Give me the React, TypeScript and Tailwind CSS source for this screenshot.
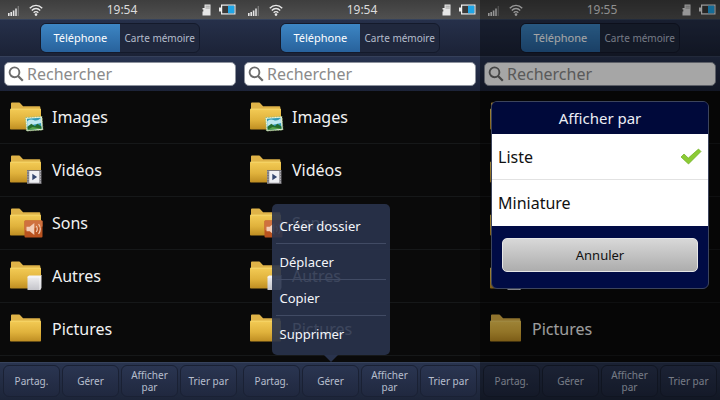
import React, { useState } from 'react';

type Badge = 'image' | 'video' | 'sound' | 'file' | null;

interface Folder {
  name: string;
  badge: Badge;
}

const folders: Folder[] = [
  { name: 'Images', badge: 'image' },
  { name: 'Vidéos', badge: 'video' },
  { name: 'Sons', badge: 'sound' },
  { name: 'Autres', badge: 'file' },
  { name: 'Pictures', badge: null },
];

const actions = ['Partag.', 'Gérer', 'Afficher par', 'Trier par'];
const menuItems = ['Créer dossier', 'Déplacer', 'Copier', 'Supprimer'];
const viewModes = ['Liste', 'Miniature'];

function SignalIcon() {
  return (
    <svg width="12" height="12" viewBox="0 0 12 12" aria-hidden="true">
      <rect x="0" y="9" width="1.6" height="3" fill="#e6e6e6" />
      <rect x="2.4" y="8" width="1.6" height="4" fill="#e6e6e6" />
      <rect x="4.8" y="6.5" width="1.6" height="5.5" fill="#e6e6e6" />
      <rect x="7.2" y="4.5" width="1.6" height="7.5" fill="#dcdcdc" />
      <rect x="9.6" y="2" width="1.4" height="10" fill="#777" />
    </svg>
  );
}

function WifiIcon() {
  return (
    <svg width="14" height="12" viewBox="0 0 14 12" fill="none" stroke="#e8e8e8" aria-hidden="true">
      <path d="M.8 4.2C4.2.4 9.8.4 13.2 4.2" strokeWidth="1.4" />
      <path d="M2.8 6.5C5.2 3.9 8.8 3.9 11.2 6.5" strokeWidth="1.4" />
      <path d="M4.7 8.7C6 7.3 8 7.3 9.3 8.7" strokeWidth="1.4" />
      <circle cx="7" cy="10.6" r="1.3" fill="#e8e8e8" stroke="none" />
    </svg>
  );
}

function CardIcon() {
  return (
    <svg width="9" height="12" viewBox="0 0 9 12" aria-hidden="true">
      <path d="M2.5 .5h6v11h-8V7.500h.8V5.500H.5V4h2z" fill="#e6e6e6" />
      <path d="M3.500 2.200h4.300M3.500 4h4.300" stroke="#8a8a8a" strokeWidth=".8" />
    </svg>
  );
}

function BatteryIcon() {
  return (
    <svg width="17" height="11" viewBox="0 0 17 11" aria-hidden="true">
      <rect x="0" y="3.500" width="2" height="4" fill="#eee" />
      <rect x="2.600" y="1.100" width="13.300" height="8.800" fill="#3a3a3a" stroke="#f0f0f0" strokeWidth="1.200" />
      <rect x="9" y="1.700" width="6.300" height="7.600" fill="#1fa5e6" />
    </svg>
  );
}

function StatusBar({ time }: { time: string }) {
  return (
    <div className="grid h-[19px] grid-cols-3 items-center bg-linear-to-b from-[#3e3e3e] to-[#505050] pr-1 pl-2">
      <div className="flex items-center gap-[9px]">
        <SignalIcon />
        <WifiIcon />
      </div>
      <span className="text-center text-xs leading-4 text-[#dcdcdc]">{time}</span>
      <div className="flex items-center justify-end gap-2">
        <CardIcon />
        <BatteryIcon />
      </div>
    </div>
  );
}

function StorageTabs() {
  const [tab, setTab] = useState(0);
  const base = 'flex-1 whitespace-nowrap text-center leading-4';
  const on = 'bg-linear-to-b from-[#3d86c4] to-[#28629c] text-white';
  const off = 'text-[#b4bccb]';
  return (
    <div className="flex h-[37px] items-center justify-center border-t border-[#35425b] bg-linear-to-b from-[#26304a] to-[#1b2236]">
      <div className="flex h-[30px] w-[67%] overflow-hidden rounded-md border border-[#141a2b] bg-[#20283d]">
        <button type="button" onClick={() => setTab(0)} className={`${base} text-[11px] ${tab === 0 ? on : off}`}>
          Téléphone
        </button>
        <button type="button" onClick={() => setTab(1)} className={`${base} text-[10px] ${tab === 1 ? on : off}`}>
          Carte mémoire
        </button>
      </div>
    </div>
  );
}

function SearchBar({ id }: { id: string }) {
  return (
    <div className="h-[35px] border-t border-[#35405a] bg-linear-to-b from-[#283350] to-[#1c2338] px-1 pt-[5px]">
      <label
        htmlFor={id}
        className="flex h-6 items-center gap-[3px] rounded-[5px] border border-[#8e939e] bg-white pl-[3px]"
      >
        <svg width="16" height="16" viewBox="0 0 16 16" fill="none" stroke="#6c6c6c" aria-hidden="true">
          <circle cx="6.500" cy="6.300" r="4.900" strokeWidth="1.900" />
          <path d="M10 10l4.800 4.800" strokeWidth="2.200" />
        </svg>
        <input
          id={id}
          type="text"
          aria-label="Rechercher"
          placeholder="Rechercher"
          className="min-w-0 flex-1 bg-transparent text-[16px] leading-5 outline-none placeholder:text-[#8a8a8a]"
        />
      </label>
    </div>
  );
}

function FolderIcon({ badge, id }: { badge: Badge; id: string }) {
  const front = `front-${id}`;
  const sheet = `sheet-${id}`;
  return (
    <svg width="34" height="32" viewBox="0 0 34 32" className="shrink-0" aria-hidden="true">
      <defs>
        <linearGradient id={front} x1="0" y1="0" x2="0" y2="1">
          <stop offset="0" stopColor="#f3cb55" />
          <stop offset=".55" stopColor="#e0b23c" />
          <stop offset="1" stopColor="#be8d22" />
        </linearGradient>
        <linearGradient id={sheet} x1="0" y1="0" x2="0" y2="1">
          <stop offset="0" stopColor="#f2f2f4" />
          <stop offset="1" stopColor="#c4c4ca" />
        </linearGradient>
      </defs>
      <path d="M1 2.500q0-1 1-1h7q.8 0 1.500.9l2.600 2.900H29.500q.8 0 .8 1V10H1z" fill="#dfb348" />
      <path d="M0 8.500Q0 7.800.8 7.800h29.400q.8 0 .8.700V27.700q0 .8-.8.800H.8Q0 28.500 0 27.700z" fill={`url(#${front})`} />
      <path d="M.5 8.200h30" stroke="#f8d970" strokeWidth=".8" />
      {badge === 'image' && (
        <g transform="rotate(-4 24 23)">
          <rect x="16" y="16" width="16.500" height="13.500" fill="#e9f2e0" stroke="#8fb877" strokeWidth=".8" strokeDasharray="1.600 1" />
          <rect x="17.300" y="17.300" width="13.900" height="10.900" fill="#2f9ab5" />
          <path d="M17.300 20q3-3 6.500-1t7.400-1.500v5l-13.900 2z" fill="#bfe8ee" />
          <path d="M17.300 25.500l4-3 3.500 2.700 2.500-2.200 3.900 3v2.200H17.300z" fill="#246b2c" />
          <path d="M17.300 28.200l5-2.200 8.900 2.200z" fill="#5aa548" />
        </g>
      )}
      {badge === 'video' && (
        <g>
          <rect x="17" y="16" width="14.500" height="14" fill="#77757a" />
          <path d="M18 17v12M30.500 17v12" stroke="#b5b5b8" strokeWidth="1" strokeDasharray="1.300 1.300" />
          <rect x="19.200" y="17" width="10.200" height="11.800" fill="#eff0f3" />
          <path d="M22.300 19.800l4.800 3.200-4.800 3.200z" fill="#33466e" />
        </g>
      )}
      {badge === 'sound' && (
        <g>
          <rect x="14.500" y="13.500" width="18" height="17" rx="1" fill="#b9521f" />
          <path d="M14.500 14.500q0-1 1-1h16q1 0 1 1v5l-18 4z" fill="#cf713f" />
          <path d="M16.500 19.800h3.200l4.600-3.800v12l-4.600-3.800h-3.200z" fill="#f3cdb6" />
          <path d="M26.200 19q2.200 3 0 6M28.600 17q3.400 5 0 10" stroke="#f3cdb6" strokeWidth="1.200" fill="none" />
        </g>
      )}
      {badge === 'file' && (
        <g>
          <path d="M19 15.500H31.500V28L30 30H17.500V17z" fill={`url(#${sheet})`} />
          <path d="M17.500 17H30V30M30 17l1.500-1.500" stroke="#fff" strokeWidth=".7" fill="none" />
        </g>
      )}
    </svg>
  );
}

function FolderList({ phone }: { phone: string }) {
  return (
    <ul className="flex-1 bg-[#0a0a0a]">
      {folders.map((folder) => (
        <li key={folder.name} className="flex h-[53px] items-center gap-2 border-b border-[#161819] px-[10px]">
          <FolderIcon badge={folder.badge} id={`${phone}-${folder.name}`} />
          <span className="text-[16px] leading-6 text-[#f2f2f2]">{folder.name}</span>
        </li>
      ))}
    </ul>
  );
}

function ManageMenu() {
  return (
    <div className="absolute bottom-full left-1/2 mb-[10px] w-[118px] -translate-x-1/2 rounded-[5px] bg-[#29334d]/90 px-1 py-1">
      <ul>
        {menuItems.map((item) => (
          <li key={item} className="border-b border-[#414b64] last:border-b-0">
            <button type="button" className="block h-[35px] w-full px-1 text-left text-[13px] leading-4 text-[#f4f6fa]">
              {item}
            </button>
          </li>
        ))}
      </ul>
      <svg width="14" height="7" viewBox="0 0 14 7" className="absolute top-full left-1/2 -translate-x-1/2" aria-hidden="true">
        <path d="M0 0h14L7 7z" fill="#29334d" />
      </svg>
    </div>
  );
}

function ActionBar({ menuOpen }: { menuOpen?: boolean }) {
  return (
    <div className="grid h-[38px] grid-cols-4 gap-[2px] border-t border-[#37435d] bg-linear-to-b from-[#29344f] to-[#1d2539] px-[3px] pt-[2px] pb-[3px]">
      {actions.map((action) => (
        <div key={action} className="relative">
          <button
            type="button"
            className="h-full w-full rounded-md border border-[#1a2134] bg-linear-to-b from-[#2a3551] to-[#20283f] px-1 text-[10px] leading-3 text-[#b6becd]"
          >
            {action}
          </button>
          {menuOpen && action === 'Gérer' && <ManageMenu />}
        </div>
      ))}
    </div>
  );
}

function ViewDialog() {
  const [mode, setMode] = useState('Liste');
  return (
    <div className="absolute inset-0 flex items-start justify-center bg-black/35 px-[11px] pt-[101px]">
      <div role="dialog" aria-labelledby="view-title" className="w-full overflow-hidden rounded-md border border-[#3c445c] bg-[#000b45]">
        <h2 id="view-title" className="bg-[#00093a] py-1 text-center text-[15px] leading-6 text-[#eceef5]">
          Afficher par
        </h2>
        <div className="bg-white text-[16px] leading-5 text-[#111]">
          {viewModes.map((item) => (
            <label key={item} className="flex h-[46px] items-center justify-between border-b border-[#e2e2e2] px-[6px] last:border-b-0">
              <input
                type="radio"
                name="view-mode"
                checked={mode === item}
                onChange={() => setMode(item)}
                className="sr-only"
              />
              <span>{item}</span>
              {mode === item && (
                <svg width="22" height="18" viewBox="0 0 22 18" aria-hidden="true">
                  <path d="M1 9L4 6L8.300 10.100L18.500 1L21 3.500L8.500 16z" fill="#8ccb35" stroke="#6fae22" strokeWidth=".7" strokeLinejoin="round" />
                </svg>
              )}
            </label>
          ))}
        </div>
        <div className="px-[10px] pt-3 pb-4">
          <button
            type="button"
            className="h-[34px] w-full rounded-[5px] border border-[#e6e6e6] bg-linear-to-b from-[#d8d8d8] to-[#adadad] text-[13px] leading-5 text-[#111]"
          >
            Annuler
          </button>
        </div>
      </div>
    </div>
  );
}

interface PhoneProps {
  id: string;
  time: string;
  menuOpen?: boolean;
  dialogOpen?: boolean;
}

function Phone({ id, time, menuOpen, dialogOpen }: PhoneProps) {
  return (
    <section className="relative flex min-w-0 flex-col">
      <StatusBar time={time} />
      <StorageTabs />
      <SearchBar id={`search-${id}`} />
      <FolderList phone={id} />
      <ActionBar menuOpen={menuOpen} />
      {dialogOpen && <ViewDialog />}
    </section>
  );
}

export default function App() {
  return (
    <main className="grid min-h-screen grid-cols-3 bg-black font-['Noto_Sans',sans-serif]">
      <Phone id="list" time="19:54" />
      <Phone id="menu" time="19:54" menuOpen />
      <Phone id="dialog" time="19:55" dialogOpen />
    </main>
  );
}
